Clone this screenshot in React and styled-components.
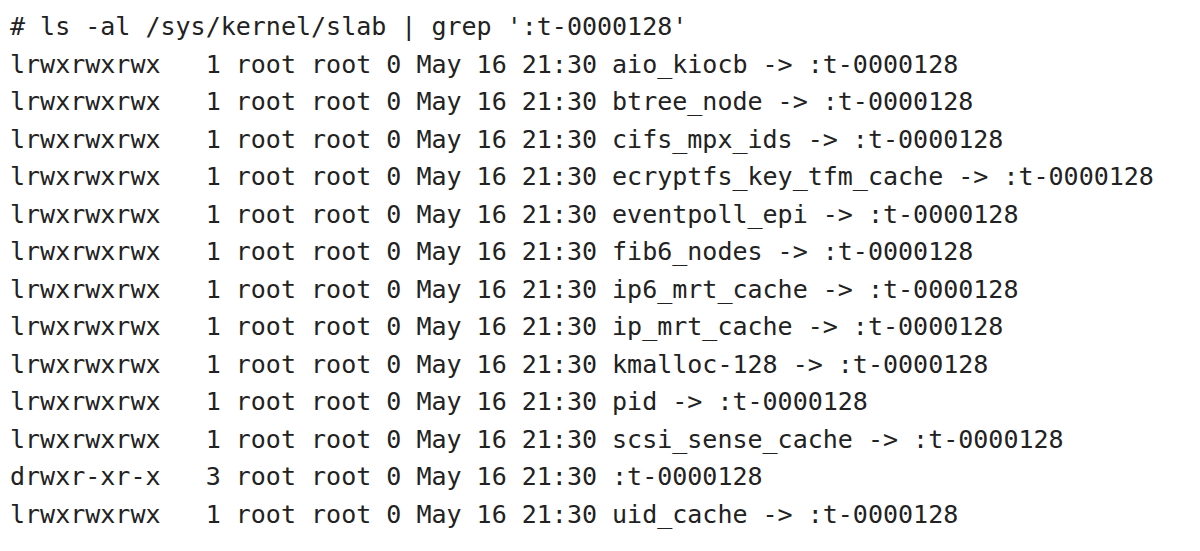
import styled, { createGlobalStyle } from "styled-components";

const GlobalStyle = createGlobalStyle`
  body {
    margin: 0;
    background: #fff;
  }
`;

const lines = [
  "# ls -al /sys/kernel/slab | grep ':t-0000128'",
  "lrwxrwxrwx   1 root root 0 May 16 21:30 aio_kiocb -> :t-0000128",
  "lrwxrwxrwx   1 root root 0 May 16 21:30 btree_node -> :t-0000128",
  "lrwxrwxrwx   1 root root 0 May 16 21:30 cifs_mpx_ids -> :t-0000128",
  "lrwxrwxrwx   1 root root 0 May 16 21:30 ecryptfs_key_tfm_cache -> :t-0000128",
  "lrwxrwxrwx   1 root root 0 May 16 21:30 eventpoll_epi -> :t-0000128",
  "lrwxrwxrwx   1 root root 0 May 16 21:30 fib6_nodes -> :t-0000128",
  "lrwxrwxrwx   1 root root 0 May 16 21:30 ip6_mrt_cache -> :t-0000128",
  "lrwxrwxrwx   1 root root 0 May 16 21:30 ip_mrt_cache -> :t-0000128",
  "lrwxrwxrwx   1 root root 0 May 16 21:30 kmalloc-128 -> :t-0000128",
  "lrwxrwxrwx   1 root root 0 May 16 21:30 pid -> :t-0000128",
  "lrwxrwxrwx   1 root root 0 May 16 21:30 scsi_sense_cache -> :t-0000128",
  "drwxr-xr-x   3 root root 0 May 16 21:30 :t-0000128",
  "lrwxrwxrwx   1 root root 0 May 16 21:30 uid_cache -> :t-0000128",
];

const App = () => {
  return (
    <>
      <GlobalStyle />
      <Terminal>
        {lines.map((line, i) => (
          <Line key={i}>{line}</Line>
        ))}
      </Terminal>
    </>
  );
};

export default App;

const Terminal = styled.pre`
  margin: 0;
  padding: 8px 0 0 10px;
  width: 1200px;
  height: 551px;
  box-sizing: border-box;
  background: #fff;
  color: #222;
  font-family: "DejaVu Sans Mono", "Liberation Mono", monospace;
  font-size: 25px;
  line-height: 37.5px;
  overflow: hidden;
`;

const Line = styled.div`
  white-space: pre;
`;
